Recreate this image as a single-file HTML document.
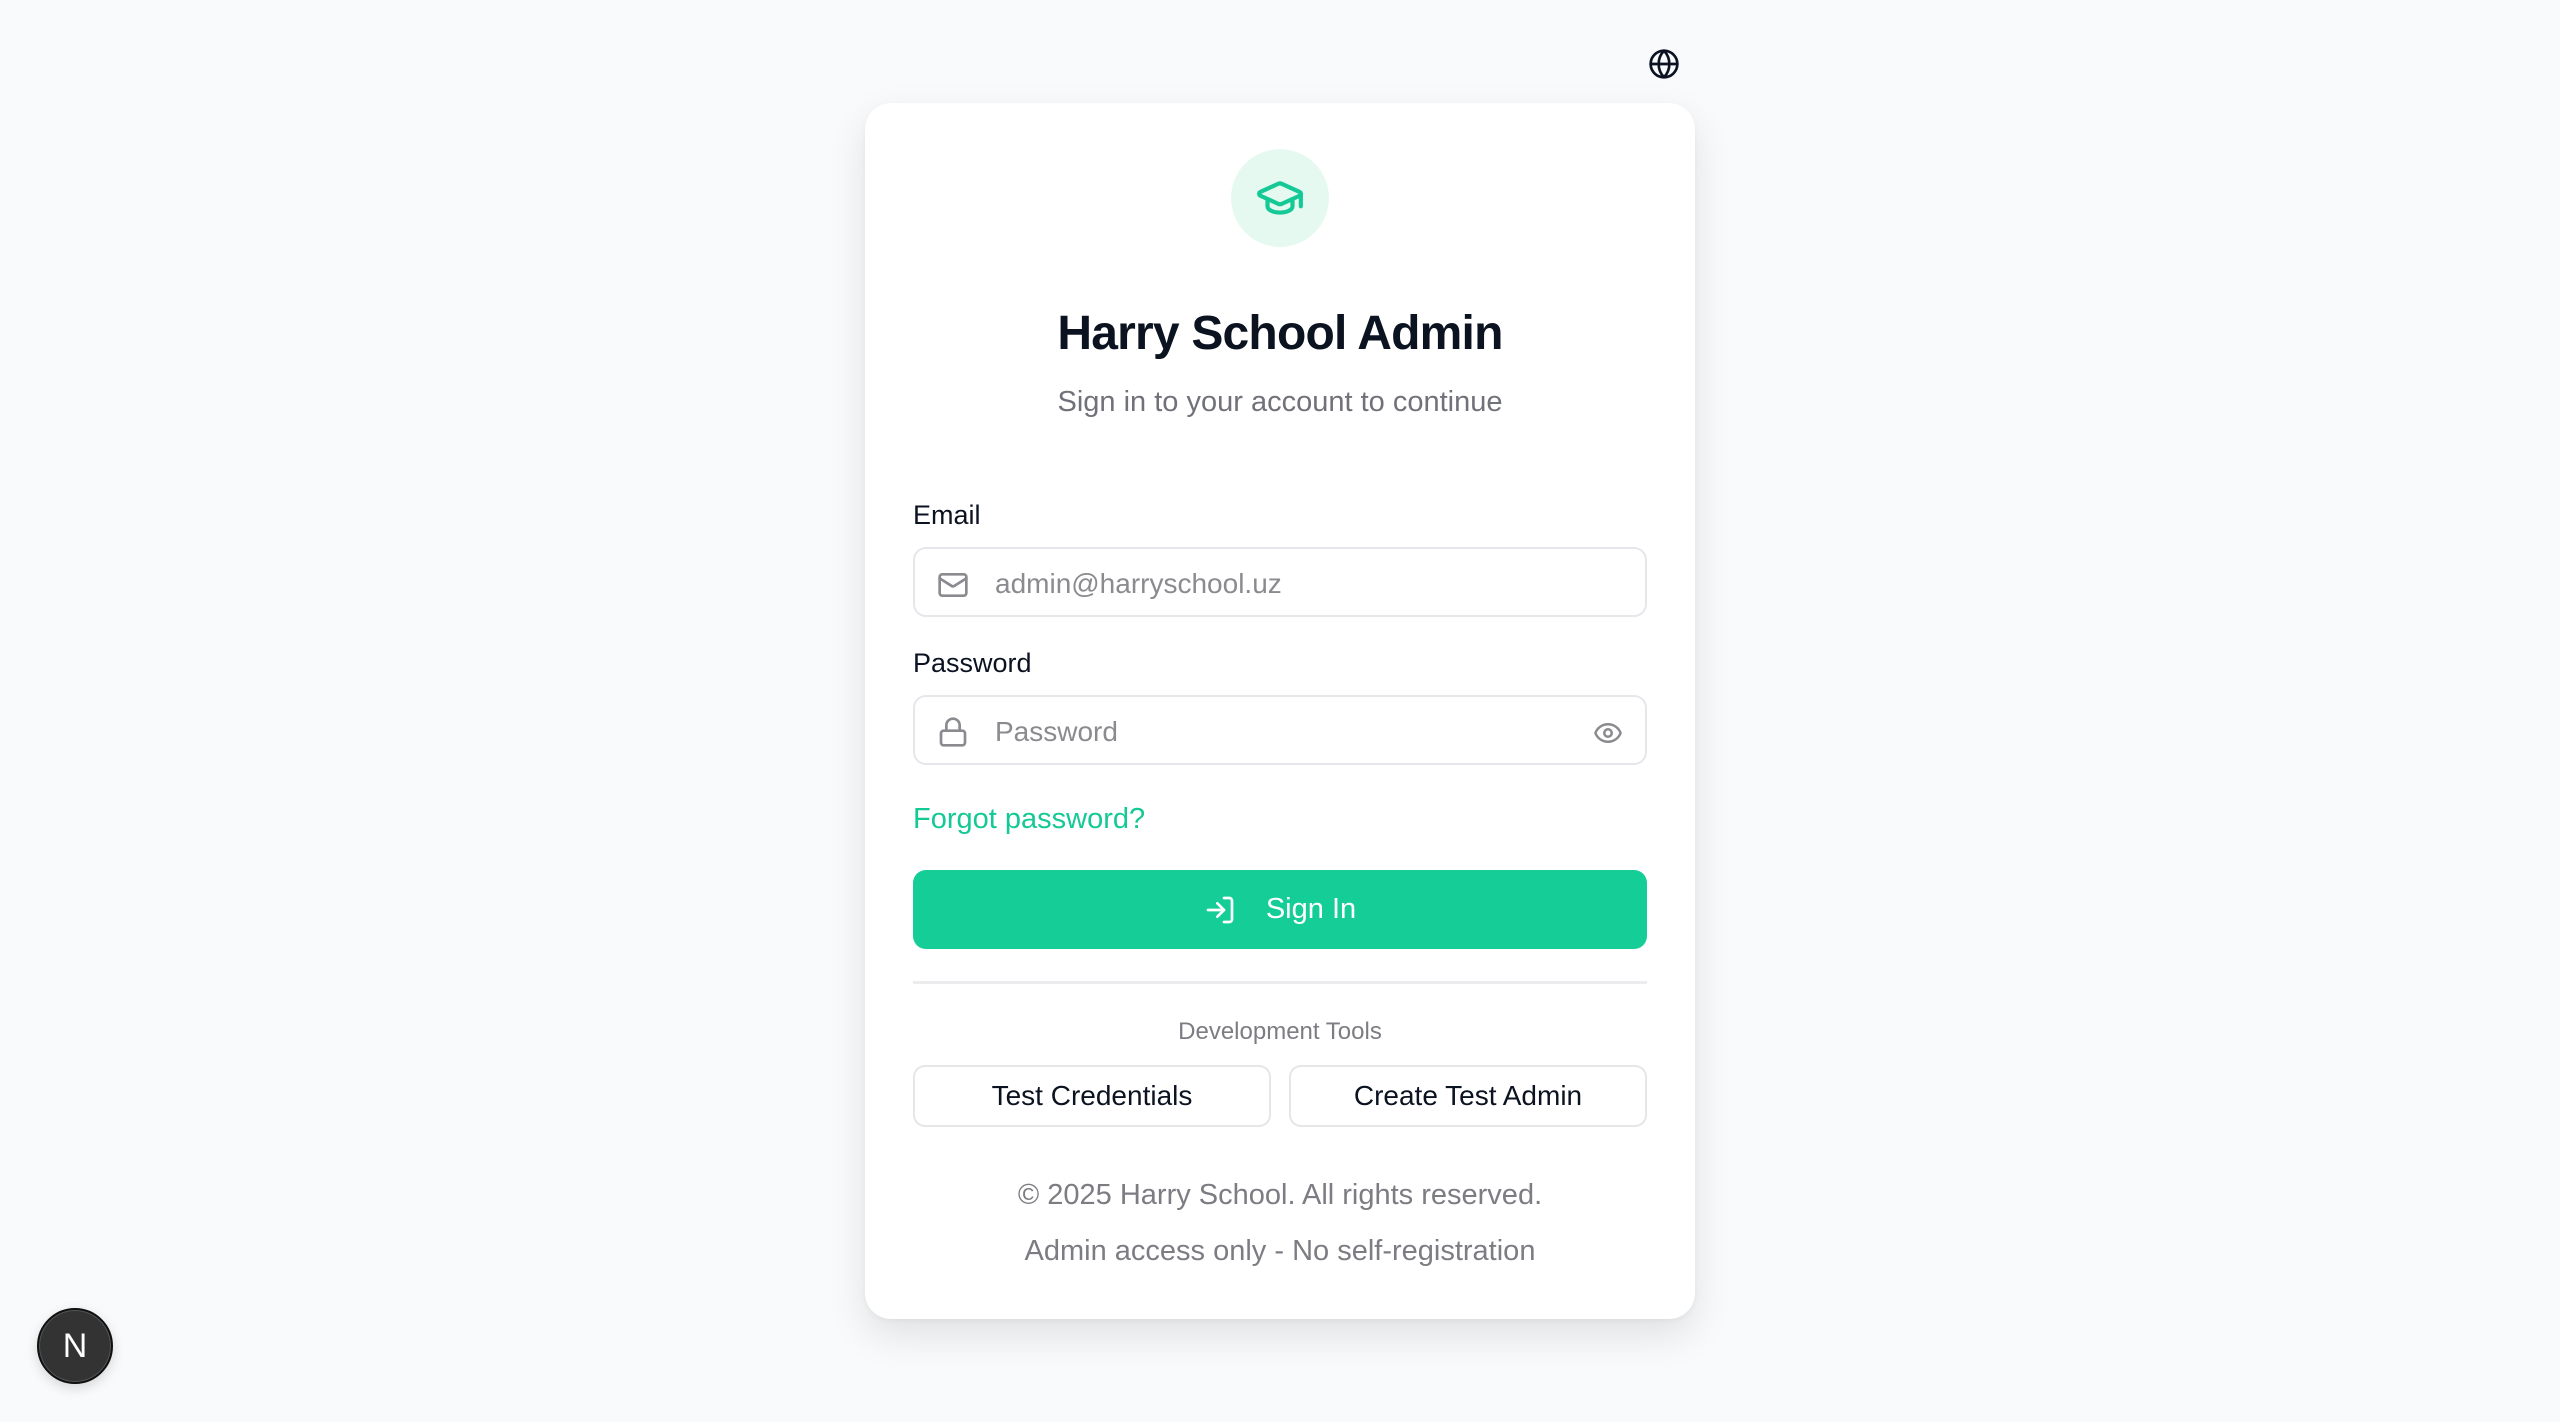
<!DOCTYPE html>
<html><head><meta charset="utf-8"><style>
*{box-sizing:border-box;margin:0;padding:0}
html,body{width:2560px;height:1422px;background:#f8fafc;font-family:"Liberation Sans",sans-serif;overflow:hidden;position:relative}
.card{position:absolute;left:865px;top:103px;width:830px;height:1216px;background:#fff;border-radius:26px;box-shadow:0 16px 40px rgba(0,0,0,.10),0 2px 6px rgba(0,0,0,.04)}
.abs{position:absolute}
.center{left:0;right:0;text-align:center}
.logo{left:366px;top:46px;width:98px;height:98px;border-radius:50%;background:#e6f9f1;display:flex;align-items:center;justify-content:center}
.title{top:203px;font-size:48px;font-weight:700;color:#0b1220;letter-spacing:-0.8px}
.sub{top:283px;font-size:29px;color:#71717a}
.label{left:48px;font-size:27px;font-weight:500;color:#0b1220}
.input{left:48px;width:734px;height:70px;border:2px solid #e5e7eb;border-radius:13px}
.input .ph{position:absolute;left:80px;top:19px;font-size:28px;color:#8a8a8f}
.input svg{position:absolute}
.forgot{left:48px;top:700px;font-size:29px;color:#14c995}
.btn{left:48px;top:767px;width:734px;height:79px;background:#14cd97;border-radius:13px;display:flex;align-items:center;justify-content:center;color:#fff;font-size:29px;font-weight:500}
.hr{left:48px;top:878px;width:734px;height:3px;background:#ececef}
.dev{top:915px;font-size:24px;color:#7c7c83}
.ob{top:962px;height:62px;border:2px solid #e6e6e9;border-radius:12px;display:flex;align-items:center;justify-content:center;font-size:28px;font-weight:500;color:#0b1220}
.foot{font-size:29px;color:#7c7c83}
</style></head><body>
<svg class="abs" style="left:1648px;top:48px" width="32" height="32" viewBox="0 0 24 24" fill="none" stroke="#0b1220" stroke-width="2" stroke-linecap="round" stroke-linejoin="round"><circle cx="12" cy="12" r="10"/><path d="M12 2a14.5 14.5 0 0 0 0 20 14.5 14.5 0 0 0 0-20"/><path d="M2 12h20"/></svg>
<div class="card">
 <div class="abs logo"><svg width="50" height="50" viewBox="0 0 24 24" fill="none" stroke="#14c995" stroke-width="2" stroke-linecap="round" stroke-linejoin="round"><path d="M21.42 10.92a1 1 0 0 0-.02-1.84L12.830 5.18a2 2 0 0 0-1.66 0L2.6 9.08a1 1 0 0 0 0 1.83l8.57 3.91a2 2 0 0 0 1.66 0z"/><path d="M22 10v6"/><path d="M6 12.5V16a6 3 0 0 0 12 0v-3.5"/></svg></div>
 <div class="abs center title">Harry School Admin</div>
 <div class="abs center sub">Sign in to your account to continue</div>
 <div class="abs label" style="top:397px">Email</div>
 <div class="abs input" style="top:444px">
  <svg style="left:22px;top:20px" width="32" height="32" viewBox="0 0 24 24" fill="none" stroke="#8a8a8f" stroke-width="2" stroke-linecap="round" stroke-linejoin="round"><rect x="2" y="4" width="20" height="16" rx="2"/><path d="m22 7-8.97 5.7a1.94 1.94 0 0 1-2.06 0L2 7"/></svg>
  <div class="ph">admin@harryschool.uz</div></div>
 <div class="abs label" style="top:545px">Password</div>
 <div class="abs input" style="top:592px">
  <svg style="left:22px;top:19px" width="32" height="32" viewBox="0 0 24 24" fill="none" stroke="#8a8a8f" stroke-width="2" stroke-linecap="round" stroke-linejoin="round"><rect x="3" y="11" width="18" height="11" rx="2"/><path d="M7 11V7a5 5 0 0 1 10 0v4"/></svg>
  <div class="ph">Password</div>
  <svg style="right:22px;top:21px" width="30" height="30" viewBox="0 0 24 24" fill="none" stroke="#8a8a8f" stroke-width="2" stroke-linecap="round" stroke-linejoin="round"><path d="M2.06 12.35a1 1 0 0 1 0-.7 10.75 10.75 0 0 1 19.88 0 1 1 0 0 1 0 .7 10.75 10.75 0 0 1-19.88 0"/><circle cx="12" cy="12" r="3"/></svg></div>
 <div class="abs forgot">Forgot password?</div>
 <div class="abs btn"><svg width="32" height="32" viewBox="0 0 24 24" fill="none" stroke="#fff" stroke-width="2" stroke-linecap="round" stroke-linejoin="round" style="margin-right:30px"><path d="M15 3h4a2 2 0 0 1 2 2v14a2 2 0 0 1-2 2h-4"/><path d="m10 17 5-5-5-5"/><path d="M15 12H3"/></svg>Sign In</div>
 <div class="abs hr"></div>
 <div class="abs center dev">Development Tools</div>
 <div class="abs ob" style="left:48px;width:358px">Test Credentials</div>
 <div class="abs ob" style="left:424px;width:358px">Create Test Admin</div>
 <div class="abs center foot" style="top:1076px">© 2025 Harry School. All rights reserved.</div>
 <div class="abs center foot" style="top:1132px">Admin access only - No self-registration</div>
</div>
<div class="abs" style="left:37px;top:1308px;width:76px;height:76px;border-radius:50%;background:#333;border:2px solid #111;box-shadow:0 0 0 1px #555 inset,0 4px 12px rgba(0,0,0,.15);display:flex;align-items:center;justify-content:center;color:#fff;font-size:34px;font-weight:400">N</div>
</body></html>
